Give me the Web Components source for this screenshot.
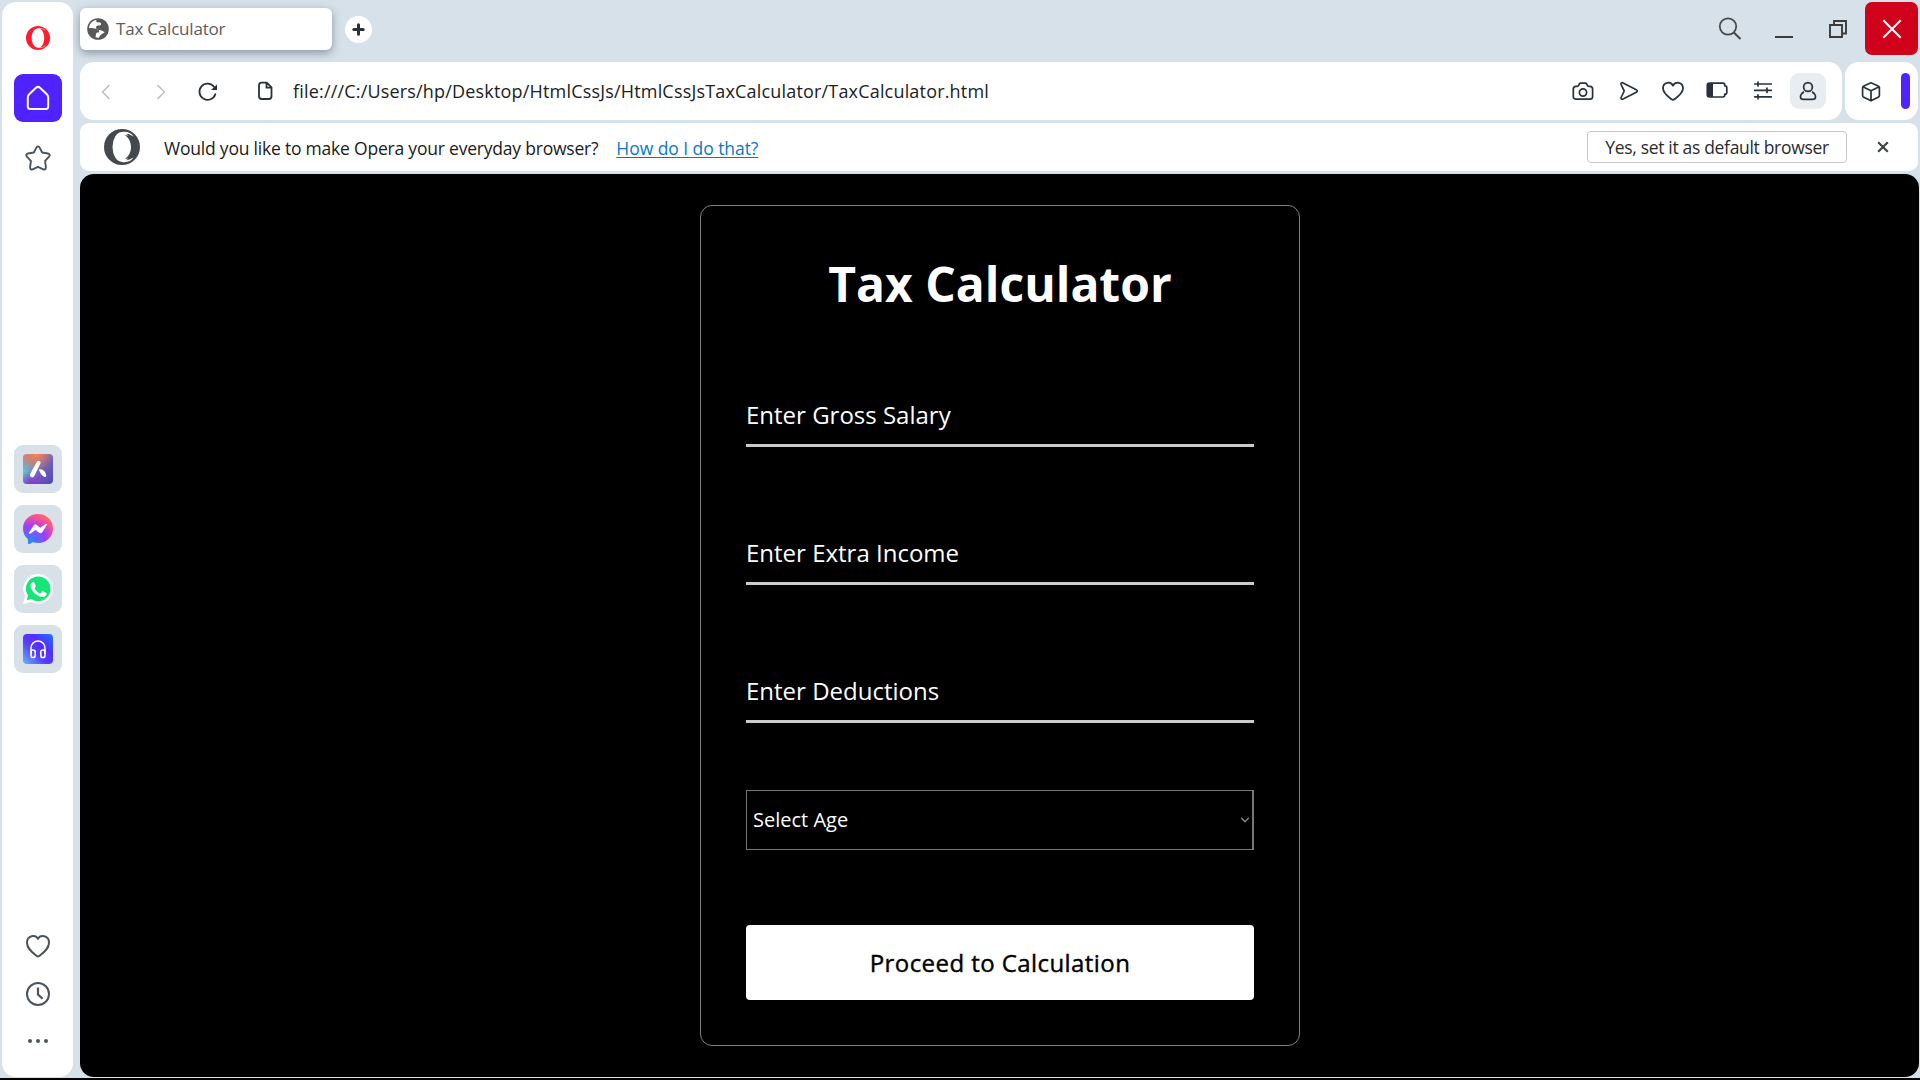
<!DOCTYPE html>
<html lang="en">
<head>
<meta charset="utf-8">
<title>Tax Calculator</title>
<style>
html,body{margin:0;height:100%;overflow:hidden;background:#000}
body{font-family:"Open Sans","Noto Sans",sans-serif}
</style>
</head>
<body>
<browser-window></browser-window>
<script>
const ICONS = {
  opera: ['0 0 36 36', '<path fill="#ff1b2d" fill-rule="evenodd" d="M18 6a12 12 0 1 0 0 24a12 12 0 1 0 0-24zM18.200 8.200c3.400 0 6 4.300 6 9.800s-2.600 9.800-6 9.800s-6.600-4-6.600-9.800s3.200-9.800 6.600-9.800z"/><path fill="#fff" d="M19 8.100c2.300-.5 4.500.200 6.400 2l-.6.500c-2-1.800-3.700-2-5.800-1.600zM19 27.900c2.300.5 4.500-.200 6.400-2l-.6-.5c-2 1.800-3.700 2-5.800 1.600z" opacity=".6"/>'],
  operaDark: ['0 0 36 36', '<circle cx="18" cy="18" r="18" fill="#43494c"/><ellipse cx="18" cy="18" rx="9.500" ry="15" fill="#fff"/><path fill="#fff" d="M18 3c5-.8 9.500 1 11.500 4.500L27 6.200C24 4.300 21 4.500 18 6zM18 33c5 .8 9.500-1 11.500-4.500L27 29.800C24 31.700 21 31.500 18 30z"/><path fill="#43494c" d="M21 6.500c5-1.500 9 3.800 9 11.500s-4 13-9 11.500c3.500-2 6-6 6-11.500s-2.500-9.500-6-11.500z"/>'],
  home: ['0 0 36 36', '<path fill="none" stroke="#fff" stroke-width="2" stroke-linejoin="round" d="M7.800 17.300c0-1.400.5-2.400 1.600-3.400l6.600-6.100c1.200-1.100 2.800-1.100 4 0l6.600 6.100c1.100 1 1.600 2 1.600 3.400v9.200c0 1.500-1 2.500-2.500 2.500H10.300c-1.500 0-2.500-1-2.500-2.500z"/>'],
  star: ['0 0 36 36', '<path fill="none" stroke="#4b545c" stroke-width="1.900" stroke-linejoin="round" d="M16.500 7.400c.7-1.300 2.300-1.300 3 0l2.700 5.100 5.800 1c1.800.3 2.300 2 1.100 3.200l-4 4.200.8 6.500c.2 1.600-1.100 2.500-2.600 1.900L18 26.800l-5.300 2.500c-1.500.6-2.800-.3-2.600-1.900l.8-6.500-4-4.200c-1.200-1.200-.7-2.900 1.100-3.200l5.800-1z"/>'],
  sideHeart: ['0 0 36 36', '<path fill="none" stroke="#4b545c" stroke-width="2" stroke-linejoin="round" d="M18 10.900c2.200-4.300 11-3.900 11 3.800 0 6-5.500 9.700-9.700 13.200-1 .8-1.600.8-2.600 0C12.500 24.400 7 20.700 7 14.700 7 7 15.800 6.600 18 10.900z"/>'],
  clock: ['0 0 36 36', '<circle cx="18" cy="18" r="11" fill="none" stroke="#4b545c" stroke-width="2"/><path fill="none" stroke="#4b545c" stroke-width="2.200" d="M18 11.500V18.500l4.600 4.300"/>'],
  dots: ['0 0 36 36', '<g fill="#4b545c"><circle cx="10" cy="18" r="2"/><circle cx="18" cy="18" r="2"/><circle cx="26" cy="18" r="2"/></g>'],
  aria: ['0 0 30 30', '<defs><linearGradient id="a" x1="0" y1="0" x2="1" y2="1"><stop offset="0" stop-color="#b58a94"/><stop offset=".5" stop-color="#7567b4"/><stop offset="1" stop-color="#5144bb"/></linearGradient><radialGradient id="b" cx="0" cy=".58" r=".55"><stop offset="0" stop-color="#58c8dc"/><stop offset="1" stop-color="#58c8dc" stop-opacity="0"/></radialGradient><radialGradient id="c" cx=".42" cy="0" r=".6"><stop offset="0" stop-color="#ff8050"/><stop offset="1" stop-color="#ff8050" stop-opacity="0"/></radialGradient><radialGradient id="d" cx=".3" cy="1" r=".45"><stop offset="0" stop-color="#8a35cf"/><stop offset="1" stop-color="#8a35cf" stop-opacity="0"/></radialGradient></defs><rect width="30" height="30" rx="4" fill="url(#a)"/><rect width="30" height="30" rx="4" fill="url(#b)"/><rect width="30" height="30" rx="4" fill="url(#c)"/><rect width="30" height="30" rx="4" fill="url(#d)"/><path fill="#fff" d="M14 7.500c1.500-1.700 4.200-.2 3.500 1.700L11.300 22c-1.500 2.700-5.500.7-4.100-2zM16 15.500c2.500-.8 5.400.8 6.500 3.700l.7 2c.5 1.500-1.200 2.300-2.500 1.400-2.300-1.600-4-4-4.700-7.100z"/>'],
  messenger: ['0 0 30 30', '<defs><radialGradient id="m" cx=".2" cy="1" r="1.100"><stop offset="0" stop-color="#1496ff"/><stop offset=".55" stop-color="#a03cfa"/><stop offset=".85" stop-color="#f6558c"/><stop offset="1" stop-color="#ff6968"/></radialGradient></defs><path fill="url(#m)" d="M15 0C6.500 0 0 6.200 0 14.500c0 4.400 1.700 7.800 4.800 10.600L5 29c0 1 .8 1.400 1.600 1l3.200-1.700c1.600.5 3.300.7 5.200.7 8.500 0 15-6.200 15-14.500S23.500 0 15 0z"/><path fill="#fff" d="M6 18.700l4.400-7c.8-1.200 2.200-1.400 3.300-.6l3.500 2.600 5.500-3.600c.8-.5 1.600.2 1.100 1l-4.400 7c-.7 1.200-2.200 1.400-3.300.6l-3.500-2.600-5.500 3.600c-.8.5-1.600-.2-1.100-1z"/>'],
  whatsapp: ['0 0 30 30', '<path fill="#fff" d="M15.200 0C23.500 0 30 6.600 30 14.800s-6.500 14.700-14.800 14.700c-2.600 0-4.900-.6-7-1.800L0 30l2.300-8A14.700 14.700 0 0 1 15.200 0z"/><circle cx="15.200" cy="14.800" r="12.300" fill="#16e577"/><path fill="#16e577" d="M3.700 26.300l2-7 5 5z"/><path fill="#fff" d="M8 9.800c1.300-2.400 2.800-2.300 3.500-.8l1.200 2.700c.3.800-.2 1.400-1.200 2.600 1.300 2.600 3.300 4.300 5.800 5.300l1.600-1.900c.5-.6.900-.5 1.500-.2l2.600 1.300c1 .5.700 1.600.1 2.400-1.100 1.600-3.200 2.300-5.400 1.600C12.800 21.300 9.500 18 7.900 14c-.5-1.500-.5-3 .1-4.200z"/>'],
  player: ['0 0 30 30', '<defs><linearGradient id="p" x1="0" y1="1" x2="1" y2="0"><stop offset="0" stop-color="#64b5ff"/><stop offset=".4" stop-color="#573dff"/><stop offset=".65" stop-color="#532eff"/><stop offset="1" stop-color="#1678ff"/></linearGradient></defs><rect width="30" height="30" rx="4" fill="url(#p)"/><g fill="none" stroke="#fff" stroke-width="1.500"><path d="M8 20v-6a7 7 0 0 1 14 0v6"/><rect x="8" y="16" width="4.200" height="7.500" rx="2.100"/><rect x="17.800" y="16" width="4.200" height="7.500" rx="2.100"/></g>'],
  globe: ['0 0 22 22', '<circle cx="11" cy="11" r="10.800" fill="#595959"/><path fill="#fff" d="M9.500 1.900C5.600 2.400 2.300 5.700 2 9.900c2.800.3 5.300.2 7.200.8 1.700.6 3.300 1.200 3 2.700-.2 1.200-1.700 1.300-3 1.500-.3 1.300-.3 2.800-.7 4.400 1 .4 2.400.5 3.500.4.300-1.500 1-2.400 2.300-3.300 1.300-.8 2.600-1.200 3.500-2.300-1.300-.4-2-1.300-3.200-1.700-1.600-.5-3.400-.1-4.600-1.200-1-1-1.400-2.300-.3-3.200 1.200-1 3.600.1 4.300-1.400.6-1.300-.8-2.500-2.600-2.200-1.300.2-2.800-.700-1.900-2.500z"/>'],
  plus: ['0 0 27 27', '<circle cx="13.500" cy="13.500" r="13.500" fill="#fff"/><path stroke="#29323a" stroke-width="3" stroke-linecap="round" d="M13.500 8.800v9.400M8.800 13.500h9.400"/>'],
  back: ['0 0 36 36', '<path fill="none" stroke="#b9bdc1" stroke-width="1.500" d="M21.500 12l-7 7 7 7"/>'],
  forward: ['0 0 36 36', '<path fill="none" stroke="#b9bdc1" stroke-width="1.500" d="M14.500 12l7 7-7 7"/>'],
  reload: ['0 0 36 36', '<path fill="none" stroke="#29323a" stroke-width="1.800" stroke-linecap="round" d="M25.300 21.200A8.100 8.100 0 1 1 24 13.800"/><path fill="#29323a" d="M27 11.500v5.600h-6z"/>'],
  file: ['0 0 36 36', '<path fill="none" stroke="#29323a" stroke-width="1.800" stroke-linejoin="round" d="M14.500 9.700h5.300l4.700 4.700v8.900c0 1.700-1 2.700-2.700 2.700h-7.100c-1.700 0-2.700-1-2.700-2.700V12.400c0-1.700.8-2.700 2.500-2.700zM19.500 10v4.700h4.700"/>'],
  camera: ['0 0 36 36', '<path fill="none" stroke="#29323a" stroke-width="1.700" stroke-linejoin="round" d="M13.500 12.500l1-1.700c.3-.5.700-.7 1.200-.7h4.600c.5 0 .9.200 1.200.7l1 1.700c.4.600.8.800 1.400.8h1c1.700 0 2.700 1 2.700 2.700v7.500c0 1.700-1 2.700-2.700 2.700H11c-1.700 0-2.700-1-2.700-2.700V16c0-1.700 1-2.700 2.700-2.700h1c.6 0 1.100-.2 1.500-.8z"/><circle cx="18" cy="19.500" r="3.600" fill="none" stroke="#29323a" stroke-width="1.700"/>'],
  send: ['0 0 36 36', '<path fill="none" stroke="#29323a" stroke-width="1.700" stroke-linejoin="round" d="M10.100 11.500c-.4-1.500.6-2.300 2-1.600l13.200 6.800c1.300.7 1.300 1.900 0 2.600l-13.200 6.800c-1.400.7-2.400-.1-2-1.600l2.900-6c.2-.4.200-.6 0-1z"/>'],
  heart: ['0 0 36 36', '<path fill="none" stroke="#29323a" stroke-width="1.800" stroke-linejoin="round" d="M18 12.700c2-4.700 10-4 10 2.600 0 5-4.700 8-8.600 11-1.100.9-1.700.9-2.800 0-3.900-3-8.600-6-8.600-11C8 8.700 16 8 18 12.700z"/>'],
  battery: ['0 0 36 36', '<path fill="none" stroke="#29323a" stroke-width="1.700" stroke-linejoin="round" d="M10.500 10.200h13.300c1.500 0 2 .8 2 2v.6c1.500 0 2 .6 2 1.700v5c0 1.100-.5 1.700-2 1.700v.6c0 1.200-.5 2.200-2 2.200H10.500c-1.500 0-2.200-.8-2.200-2.200v-9.400c0-1.400.7-2.200 2.200-2.200z"/><path fill="#29323a" d="M8.500 10.500H14V24H8.500z"/>'],
  sliders: ['0 0 36 36', '<path stroke="#29323a" stroke-width="1.700" stroke-linecap="round" d="M9.700 11h16.600M9.700 17.300h16.600M9.700 23.800h16.600M13 9v4M22 15.200v4.200M13 21.800v4"/>'],
  person: ['0 0 36 36', '<g fill="none" stroke="#29323a" stroke-width="1.700"><circle cx="18" cy="14" r="4.400"/><path d="M14 18.700c-2.200 1.300-3.500 3.400-3.500 5.300s1.300 2.400 3 2.400h9c1.700 0 3-.5 3-2.400s-1.300-4-3.500-5.300"/></g>'],
  cube: ['0 0 36 36', '<path fill="none" stroke="#29323a" stroke-width="1.700" stroke-linejoin="round" d="M18 9.800l7.200 3.200c.8.300 1.200.8 1.200 1.600v8c0 .8-.4 1.300-1.200 1.600L18 27.800l-7.200-3.600c-.8-.3-1.200-.8-1.200-1.600v-8c0-.8.4-1.300 1.200-1.600zM9.800 13.800L18 17.700l8.200-3.900M18 17.700v10"/>'],
  search: ['0 0 36 36', '<g fill="none" stroke="#44474a" stroke-width="1.700"><circle cx="16" cy="15.500" r="8.200"/><path stroke-width="2" d="M21.800 21.500l6.700 6.500"/></g>'],
  minimise: ['0 0 36 36', '<path fill="#3b3b3b" d="M9 25h18v2H9z"/>'],
  restore: ['0 0 36 36', '<g fill="none" stroke="#3b3b3b" stroke-width="1.900"><path d="M10 14h12v12H10z"/><path d="M14 14v-4h12v12.500h-4"/></g>'],
  close: ['0 0 36 36', '<path stroke="#fff" stroke-width="2" d="M9.300 9.300l17.400 17.400M26.700 9.300L9.300 26.700"/>'],
  dismiss: ['0 0 36 36', '<path stroke="#3f4447" stroke-width="2.200" d="M13.200 13.200l9.600 9.600M22.800 13.200l-9.600 9.600"/>'],
  chevron: ['0 0 10 8', '<path fill="none" stroke="#8a8a8a" stroke-width="1.300" d="M1.200 1.800L5 5.800l3.800-4"/>']
};

const define = (name, markup) => customElements.define(name, class extends HTMLElement {
  connectedCallback() {
    if (this.shadowRoot) return;
    const template = document.createElement('template');
    template.innerHTML = typeof markup === 'function' ? markup(this) : markup;
    this.attachShadow({ mode: 'open' }).append(template.content.cloneNode(true));
  }
});

define('ui-icon', el => {
  const [box, art] = ICONS[el.getAttribute('name')];
  const [, , w, h] = box.split(' ');
  return `<style>:host{display:block;flex:none;width:${w}px;height:${h}px}svg{display:block;width:100%;height:100%}</style><svg viewBox="${box}" aria-hidden="true">${art}</svg>`;
});

define('side-tile', `<style>
:host{display:flex;flex:none;align-items:center;justify-content:center;width:48px;height:48px;border-radius:9px;background:var(--tile,#d7e1e7)}
</style><slot></slot>`);

define('side-bar', `<style>
:host{display:flex;flex-direction:column;align-items:center;box-sizing:border-box;width:71px;height:1075px;margin:2px 0 0 2px;padding:18px 0 0 1px;border-radius:14px;background:#fff}
.top{display:flex;flex-direction:column;align-items:center;gap:18px}
.apps{display:flex;flex-direction:column;gap:12px;margin-top:268.500px}
.foot{display:flex;flex-direction:column;gap:12px;margin-top:255.500px}
.foot ui-icon:last-child{margin-top:-1px}
</style>
<div class="top"><ui-icon name="opera"></ui-icon><side-tile style="--tile:#4f22ff"><ui-icon name="home"></ui-icon></side-tile><ui-icon name="star"></ui-icon></div>
<div class="apps"><side-tile><ui-icon name="aria"></ui-icon></side-tile><side-tile><ui-icon name="messenger"></ui-icon></side-tile><side-tile><ui-icon name="whatsapp"></ui-icon></side-tile><side-tile><ui-icon name="player"></ui-icon></side-tile></div>
<div class="foot"><ui-icon name="sideHeart"></ui-icon><ui-icon name="clock"></ui-icon><ui-icon name="dots"></ui-icon></div>`);

define('tab-strip', `<style>
:host{display:flex;height:62px;align-items:flex-start}
.tab{display:flex;align-items:center;box-sizing:border-box;width:252px;height:42px;margin-top:8px;padding-left:7px;gap:7px;border-radius:6px;background:#fff;box-shadow:0 3px 9px rgba(60,75,90,.5);color:#5c5c5c;font-size:17px;line-height:24px;letter-spacing:-.2px;white-space:nowrap}
.plus{margin:15.500px 0 0 12.500px}
.controls{display:flex;margin-left:auto;padding:11px 0 0;gap:18px}
.close{display:flex;align-items:center;justify-content:center;width:53px;height:53px;margin:2px 2px 0 9px;border-radius:7px;background:#d0021b}
</style>
<div class="tab"><ui-icon name="globe"></ui-icon><span>Tax Calculator</span></div>
<ui-icon class="plus" name="plus"></ui-icon>
<div class="controls"><ui-icon name="search"></ui-icon><ui-icon name="minimise"></ui-icon><ui-icon name="restore"></ui-icon></div>
<div class="close"><ui-icon name="close"></ui-icon></div>`);

define('tool-bar', `<style>
:host{display:flex;gap:3px;height:58px;padding-right:2px}
.main,.extra{display:flex;align-items:center;box-sizing:border-box;border-radius:14px;background:#fff}
.main{flex:1;padding:0 16px 0 8px}
.extra{width:73px;padding-left:8px}
.url{margin-left:10px;color:#202124;font-size:18px;line-height:28px;letter-spacing:.18px;white-space:nowrap}
.right{display:flex;margin-left:auto}
.user{border-radius:9px;background:#e8edf1}
.pill{width:9px;height:36px;margin-left:12px;border-radius:5px;background:#4f22ff}
</style>
<div class="main">
<ui-icon name="back"></ui-icon><ui-icon name="forward" style="margin-left:19px"></ui-icon><ui-icon name="reload" style="margin-left:11px"></ui-icon><ui-icon name="file" style="margin-left:21px"></ui-icon>
<span class="url">file:///C:/Users/hp/Desktop/HtmlCssJs/HtmlCssJsTaxCalculator/TaxCalculator.html</span>
<div class="right"><ui-icon name="camera"></ui-icon><ui-icon name="send" style="margin-left:10px"></ui-icon><ui-icon name="heart" style="margin-left:8px"></ui-icon><ui-icon name="battery" style="margin-left:8px"></ui-icon><ui-icon name="sliders" style="margin-left:10px"></ui-icon><ui-icon class="user" name="person" style="margin-left:9px"></ui-icon></div>
</div>
<div class="extra"><ui-icon name="cube"></ui-icon><div class="pill"></div></div>`);

define('default-banner', `<style>
:host{display:flex;align-items:center;box-sizing:border-box;height:48px;margin:3px 2px 0 0;padding:0 17px 0 24px;border-radius:9px;background:#fff;color:#1b1b1b;font-size:17.500px;line-height:26px;white-space:nowrap}
.ask{margin:2px 0 0 24px;letter-spacing:-.21px}
a{margin:2px 0 0 18px;color:#0a78c8;letter-spacing:-.06px;text-decoration:underline;text-decoration-thickness:1px;text-underline-offset:2px}
button{box-sizing:border-box;width:260px;height:32px;margin:-1px 18px 0 auto;padding:0;border:1px solid #c4c8ca;border-radius:4px;background:#fff;color:#2b2b2b;font:inherit;line-height:28px;letter-spacing:-.32px}
</style>
<ui-icon name="operaDark"></ui-icon><span class="ask">Would you like to make Opera your everyday browser?</span><a>How do I do that?</a>
<button>Yes, set it as default browser</button><ui-icon name="dismiss"></ui-icon>`);

define('line-field', `<style>
:host{display:block;box-sizing:border-box;height:50px;border-bottom:3px solid #ccc;color:#fff;font-size:24px;line-height:36px}
</style><slot></slot>`);

define('age-select', `<style>
:host{display:flex;align-items:center;justify-content:space-between;box-sizing:border-box;height:60px;margin-top:67px;padding:0 2px 0 6px;border:1px solid #767676;border-right-width:2px;color:#fff;font-size:20px;line-height:30px}
</style><span><slot></slot></span><ui-icon name="chevron"></ui-icon>`);

define('tax-card', `<style>
:host{display:flex;flex-direction:column;box-sizing:border-box;width:600px;height:841px;margin-top:31px;padding:45px 45px 0;border:1px solid #808080;border-radius:12px}
h1{margin:0;color:#fff;text-align:center;font-size:48px;font-weight:700;line-height:66px}
.fields{display:flex;flex-direction:column;gap:88px;margin-top:80px}
button{height:75px;margin-top:75px;padding:0;border:0;border-radius:4px;background:#fff;color:#000;font:500 24px/36px "Open Sans",sans-serif;letter-spacing:.43px;-webkit-text-stroke:.4px #000}
</style>
<h1>Tax Calculator</h1>
<div class="fields"><line-field>Enter Gross Salary</line-field><line-field>Enter Extra Income</line-field><line-field>Enter Deductions</line-field></div>
<age-select>Select Age</age-select>
<button>Proceed to Calculation</button>`);

define('page-view', `<style>
:host{display:flex;flex-direction:column;align-items:center;box-sizing:border-box;height:903px;margin:3px 1px 0 0;padding-left:1px;border-radius:14px;background:#000}
</style><slot></slot>`);

define('browser-window', `<style>
:host{display:flex;box-sizing:border-box;height:1078px;background:#d7e1ea}
main{display:flex;flex-direction:column;flex:1;margin-left:7px}
</style>
<side-bar></side-bar>
<main><tab-strip></tab-strip><tool-bar></tool-bar><default-banner></default-banner><page-view><tax-card></tax-card></page-view></main>`);
</script>
</body>
</html>
